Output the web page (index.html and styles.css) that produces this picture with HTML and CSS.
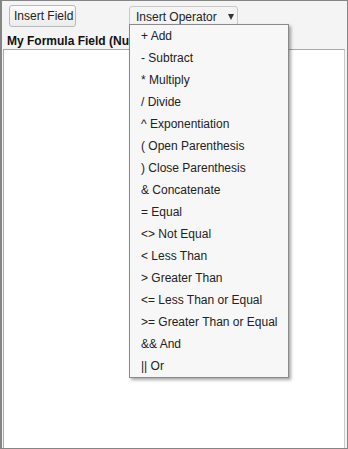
FILE: index.html
```html
<!DOCTYPE html>
<html>
<head>
<meta charset="utf-8">
<link rel="stylesheet" href="styles.css">
</head>
<body>
<div class="frame">
  <div class="toolbar">
    <button class="btn btn-field">Insert Field</button>
    <div class="op-wrap">
      <button class="btn btn-op">Insert Operator <span class="caret"></span></button>
      <ul class="menu">
        <li>+ Add</li>
        <li>- Subtract</li>
        <li>* Multiply</li>
        <li>/ Divide</li>
        <li>^ Exponentiation</li>
        <li>( Open Parenthesis</li>
        <li>) Close Parenthesis</li>
        <li>&amp; Concatenate</li>
        <li>= Equal</li>
        <li>&lt;&gt; Not Equal</li>
        <li>&lt; Less Than</li>
        <li>&gt; Greater Than</li>
        <li>&lt;= Less Than or Equal</li>
        <li>&gt;= Greater Than or Equal</li>
        <li>&amp;&amp; And</li>
        <li>|| Or</li>
      </ul>
    </div>
  </div>
  <div class="label">My Formula Field (Number)</div>
  <div class="editor"></div>
</div>
</body>
</html>
```
FILE: styles.css
```css
html, body {
  margin: 0;
  padding: 0;
  background: #f3f3f3;
}
.frame {
  width: 348px;
  height: 449px;
  box-sizing: border-box;
  border: 1px solid #858585;
  border-left-width: 2px;
  background: #f4f4f4;
  display: flex;
  flex-direction: column;
  font-family: "Liberation Sans", Arial, sans-serif;
  color: #222;
  padding: 4px 2px 0 1px;
}
.toolbar {
  display: flex;
  align-items: flex-start;
  padding-left: 6px;
  height: 23px;
}
.btn {
  font-family: "Liberation Sans", Arial, sans-serif;
  font-size: 12px;
  color: #222;
  background: linear-gradient(#fbfbfb, #ececec);
  border: 1px solid #b8b8b8;
  border-radius: 3px;
  padding: 0 4px;
  margin: 0;
  height: 22px;
  line-height: 20px;
  box-sizing: border-box;
  white-space: nowrap;
}
.btn-field {
  width: 67px;
}
.op-wrap {
  position: relative;
  margin-left: 53px;
  margin-top: 1px;
}
.btn-op {
  width: 109px;
  height: 21px;
  text-align: left;
  padding-left: 6px;
  border-color: #c8c8c8;
  background: #f4f4f4;
}
.caret {
  display: inline-block;
  width: 0;
  height: 0;
  border-left: 3.5px solid transparent;
  border-right: 3.5px solid transparent;
  border-top: 6px solid #333;
  margin-left: 8px;
  vertical-align: 1px;
}
.menu {
  position: absolute;
  top: 18px;
  left: 0;
  width: 160px;
  box-sizing: border-box;
  margin: 0;
  padding: 0;
  list-style: none;
  background: #f7f7f7;
  border: 1px solid #8a8a8a;
  box-shadow: 2px 2px 3px rgba(0, 0, 0, 0.35);
  z-index: 2;
}
.menu li {
  height: 22px;
  line-height: 22px;
  font-size: 12px;
  padding-left: 11px;
  color: #222;
  white-space: nowrap;
}
.label {
  font-size: 12px;
  font-weight: bold;
  color: #111;
  padding-left: 4px;
  margin-top: 6px;
  height: 15px;
  line-height: 15px;
  width: 124px;
  white-space: nowrap;
  overflow: hidden;
}
.editor {
  flex: 1;
  background: #fff;
  border: 1px solid #aaa;
  border-bottom: none;
  border-right: 1px solid #c8c8c8;
}
```
